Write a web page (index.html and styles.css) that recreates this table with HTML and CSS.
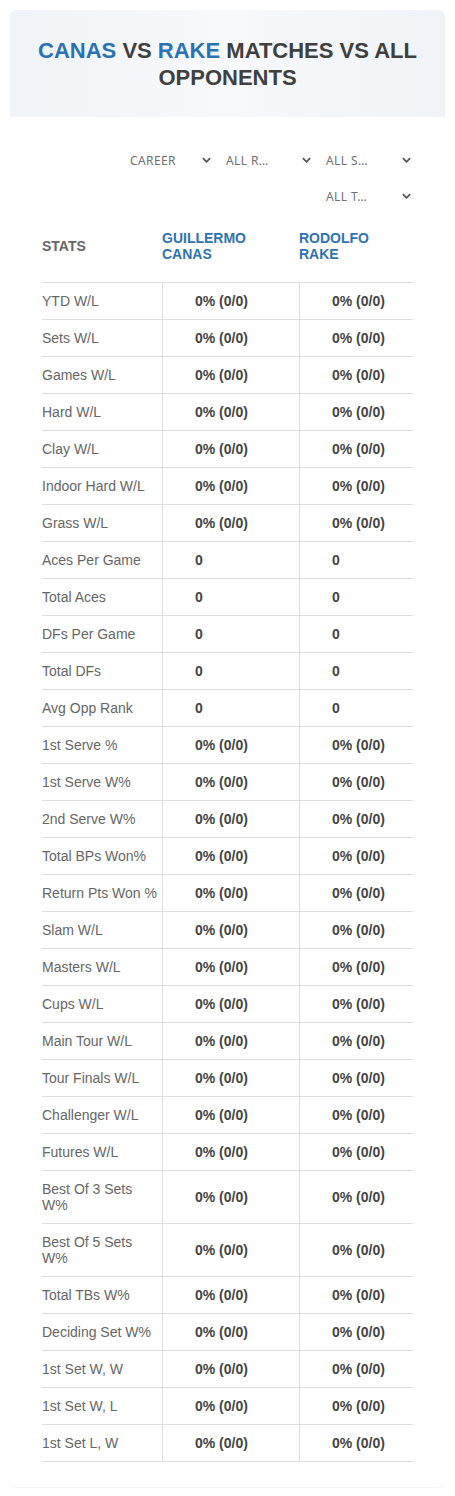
FILE: index.html
```html
<!DOCTYPE html>
<html lang="en">
<head>
    <meta charset="UTF-8">
    <meta name="viewport" content="width=device-width, initial-scale=1.0">
    <title>Canas vs Rake Matches vs All Opponents</title>
    <link rel="stylesheet" href="styles.css">
</head>
<body>
    <div class="card">
        <div class="card-head">
            <h1><span class="name">CANAS</span> VS <span class="name">RAKE</span> MATCHES VS ALL OPPONENTS</h1>
        </div>
        <div class="card-body">
            <div class="filters">
                <div class="filter"><span>CAREER</span><svg viewBox="0 0 10 6"><path d="M1 1l4 4 4-4"/></svg></div>
                <div class="filter"><span>ALL R…</span><svg viewBox="0 0 10 6"><path d="M1 1l4 4 4-4"/></svg></div>
                <div class="filter"><span>ALL S…</span><svg viewBox="0 0 10 6"><path d="M1 1l4 4 4-4"/></svg></div>
                <div class="filter"><span>ALL T…</span><svg viewBox="0 0 10 6"><path d="M1 1l4 4 4-4"/></svg></div>
            </div>
            <div class="stats" id="stats">
                <div class="th">STATS</div>
                <div class="th player">GUILLERMO CANAS</div>
                <div class="th player">RODOLFO RAKE</div>
            </div>
        </div>
    </div>

    <script>
        const stats = document.getElementById('stats');
        const rows = [
            ['YTD W/L', '0% (0/0)'], ['Sets W/L', '0% (0/0)'], ['Games W/L', '0% (0/0)'],
            ['Hard W/L', '0% (0/0)'], ['Clay W/L', '0% (0/0)'], ['Indoor Hard W/L', '0% (0/0)'],
            ['Grass W/L', '0% (0/0)'], ['Aces Per Game', '0'], ['Total Aces', '0'],
            ['DFs Per Game', '0'], ['Total DFs', '0'], ['Avg Opp Rank', '0'],
            ['1st Serve %', '0% (0/0)'], ['1st Serve W%', '0% (0/0)'], ['2nd Serve W%', '0% (0/0)'],
            ['Total BPs Won%', '0% (0/0)'], ['Return Pts Won %', '0% (0/0)'], ['Slam W/L', '0% (0/0)'],
            ['Masters W/L', '0% (0/0)'], ['Cups W/L', '0% (0/0)'], ['Main Tour W/L', '0% (0/0)'],
            ['Tour Finals W/L', '0% (0/0)'], ['Challenger W/L', '0% (0/0)'], ['Futures W/L', '0% (0/0)'],
            ['Best Of 3 Sets W%', '0% (0/0)'], ['Best Of 5 Sets W%', '0% (0/0)'], ['Total TBs W%', '0% (0/0)'],
            ['Deciding Set W%', '0% (0/0)'], ['1st Set W, W', '0% (0/0)'], ['1st Set W, L', '0% (0/0)'],
            ['1st Set L, W', '0% (0/0)']
        ];

        rows.forEach(([label, value]) => {
            const cells = [[label, 'td label'], [value, 'td value'], [value, 'td value']];
            cells.forEach(([text, cls]) => {
                const cell = document.createElement('div');
                cell.className = cls;
                cell.textContent = text;
                stats.appendChild(cell);
            });
        });
    </script>
</body>
</html>
```

FILE: styles.css
```css
body {
    margin: 0;
    padding: 10px;
    font-family: "Liberation Sans", Arial, sans-serif;
    background: #fff;
    color: #444;
}
.card {
    background: #fff;
    border-radius: 6px;
    box-shadow: 0 1px 2px rgba(0, 0, 0, 0.05);
}
.card-head {
    height: 107px;
    display: flex;
    align-items: center;
    justify-content: center;
    border-radius: 6px 6px 0 0;
    background: linear-gradient(90deg, #f0f3f7 0%, #f7f9fb 50%, #eff3f7 100%);
}
h1 {
    margin: 0;
    padding: 0 20px;
    font-size: 22px;
    line-height: 27px;
    font-weight: bold;
    text-align: center;
    color: #404040;
}
.name {
    color: #2a72b3;
}
.card-body {
    padding: 27px 32px 25px;
}
.filters {
    display: flex;
    flex-wrap: wrap;
    justify-content: flex-end;
    gap: 4px 5px;
    margin-right: -2px;
}
.filter {
    width: 95px;
    height: 32px;
    box-sizing: border-box;
    padding: 0 4px 0 6px;
    display: flex;
    align-items: center;
    justify-content: space-between;
    font-family: "Noto Sans", sans-serif;
    font-size: 12px;
    letter-spacing: 0.4px;
    color: #707070;
}
.filter:first-child {
    padding-left: 10px;
}
.filter svg {
    width: 9px;
    height: 6px;
    fill: none;
    stroke: #555;
    stroke-width: 2;
}
.stats {
    display: grid;
    grid-template-columns: 120px 137px 1fr;
    margin-top: 8px;
}
.th {
    padding: 10px 0 20px;
    font-size: 14px;
    line-height: 16px;
    font-weight: bold;
    color: #666;
    border-bottom: 1px solid #ddd;
    display: flex;
    align-items: center;
}
.th.player {
    color: #2f72b0;
    padding-right: 30px;
}
.td {
    padding: 10px 4px 10px 0;
    font-size: 14px;
    line-height: 16px;
    border-bottom: 1px solid #ddd;
    display: flex;
    align-items: center;
}
.label {
    color: #666;
}
.value {
    padding-left: 32px;
    font-weight: bold;
    color: #444;
    border-left: 1px solid #ddd;
}
```
